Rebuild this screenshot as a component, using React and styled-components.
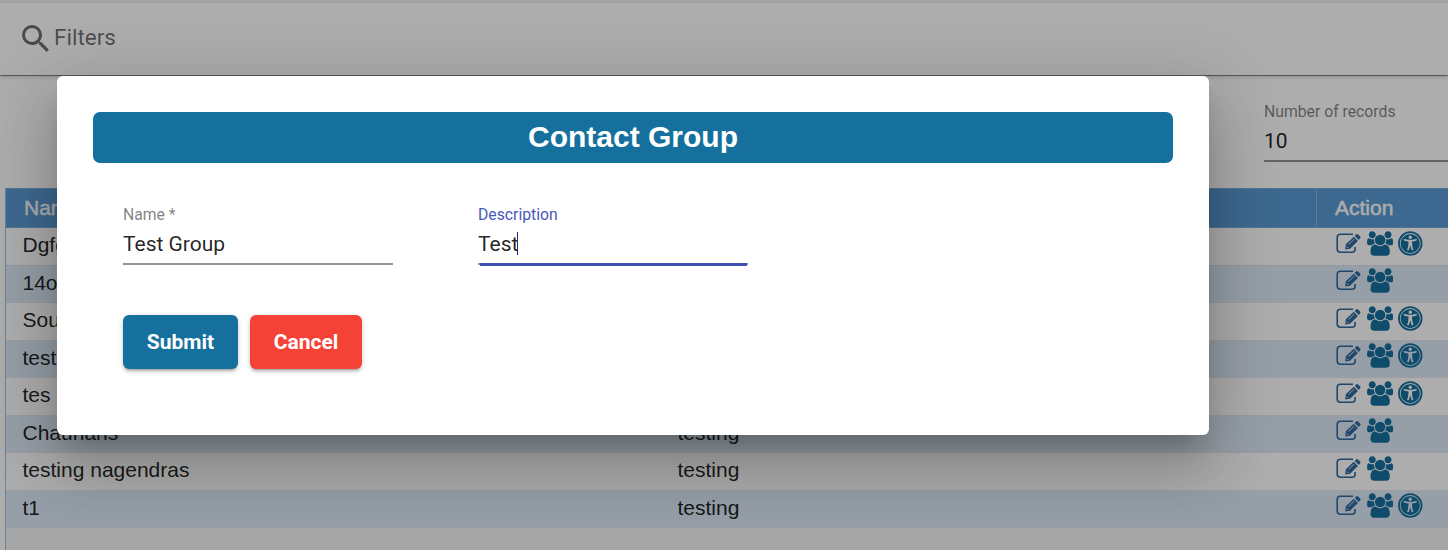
import React from "react";
import styled, { createGlobalStyle, css } from "styled-components";

const Global = createGlobalStyle`
  * { box-sizing: border-box; }
  html, body { margin: 0; height: 100%; overflow: hidden; }
  body { background: #fff; font-family: Roboto, "Liberation Sans", sans-serif; color: rgba(0,0,0,.87); }
`;

const Page = styled.div`
  position: relative;
  height: 550px;
  overflow: hidden;
  background: #fff;
`;

const TopStrip = styled.div`
  height: 3px;
  background: #f4f4f4;
`;

const FilterBar = styled.header`
  display: flex;
  align-items: center;
  gap: 5px;
  height: 72px;
  padding: 0 0 4px 22px;
  color: rgba(0, 0, 0, 0.56);
  font-size: 22.5px;
  background: #fff;
  box-shadow: 0 1px 0 rgba(0, 0, 0, 0.3), 0 2px 1px -1px rgba(0, 0, 0, 0.2), 0 2px 5px rgba(0, 0, 0, 0.15);
`;

const SearchIcon = styled.svg`
  width: 27px;
  height: 27px;
  margin-top: 2px;
  fill: #6e6e6e;
`;

const Toolbar = styled.section`
  display: flex;
  justify-content: flex-end;
  height: 113px;
  padding-top: 25px;
`;

const Field = styled.div`
  width: ${(p) => p.$width}px;
`;

const Label = styled.div`
  height: 21px;
  padding-top: 1px;
  line-height: 21px;
  font-size: 15.75px;
  color: ${(p) => (p.$focused ? "#4758bb" : "rgba(0,0,0,.5)")};
`;

const Value = styled.div`
  display: flex;
  align-items: center;
  height: 39px;
  font-size: 21px;
`;

const Caret = styled.span`
  width: 1px;
  height: 23px;
  margin-left: -1px;
  background: #222b70;
`;

const Underline = styled.div`
  height: 2px;
  background: #949494;
  ${(p) =>
    p.$focused &&
    css`
      padding: 0 1.5px;
      &::after {
        content: "";
        display: block;
        height: 3px;
        background: #3f51b5;
      }
    `}
`;

const Grid = styled.div`
  height: 380px;
  margin-left: 5px;
  border-left: 1px solid #9bc2e6;
  background: #f5f5f5;
  font-family: "Liberation Sans", Arial, sans-serif;
  font-size: 21px;
`;

const Row = styled.div`
  display: grid;
  grid-template-columns: 655px 656px 1fr;
  height: 37.5px;
  background: ${(p) => (p.$alt ? "#ddebf7" : "#fff")};
  border-bottom: 1px ${(p) => (p.$first ? "dotted #b9c8d8" : "solid #e3e8ed")};
`;

const HeadRow = styled(Row)`
  height: 40px;
  color: #fff;
  background: #5b9bd5;
  border-top: 1px solid #79addb;
  border-bottom: 1px solid #79addb;
  -webkit-text-stroke: 0.45px #fff;
`;

const Cell = styled.div`
  display: flex;
  align-items: center;
  padding: 0 0 2px 16.5px;
  white-space: nowrap;
`;

const HeadCell = styled(Cell)`
  padding: 0 0 0 18px;
  ${(p) => !p.$last && "border-right: 1px solid #8ab8e2;"}
`;

const Actions = styled(Cell)`
  align-items: flex-start;
  gap: 5.5px;
  padding: 2.6px 0 0 19px;
`;

const ActionIcon = styled.svg`
  flex: none;
  width: ${(p) => p.$w}px;
  height: 25px;
  color: #17709f;
`;

const Backdrop = styled.div`
  position: absolute;
  inset: 0;
  padding: 76px 0 0 57px;
  background: rgba(0, 0, 0, 0.32);
`;

const Dialog = styled.div`
  width: 1152px;
  height: 359px;
  padding: 36px;
  border-radius: 6px;
  background: #fff;
  box-shadow: 0 16px 22px -10px rgba(0, 0, 0, 0.2), 0 36px 57px 4px rgba(0, 0, 0, 0.14), 0 14px 69px 12px rgba(0, 0, 0, 0.12);
`;

const Title = styled.h1`
  height: 51px;
  margin: 0;
  border-radius: 7px;
  background: #16709e;
  color: #fff;
  font: bold 30px/50px "Liberation Sans", Arial, sans-serif;
  text-align: center;
`;

const Fields = styled.div`
  display: flex;
  gap: 85px;
  padding: 40px 30px 0;
`;

const Buttons = styled.div`
  display: flex;
  gap: 12px;
  padding: 50px 30px 0;
`;

const Button = styled.button`
  width: ${(p) => p.$width}px;
  height: 54px;
  padding: 0;
  border: 0;
  border-radius: 6px;
  background: ${(p) => p.$color};
  color: #fff;
  font: 700 21px Roboto, sans-serif;
  box-shadow: 0 4px 2px -3px rgba(0, 0, 0, 0.2), 0 3px 3px rgba(0, 0, 0, 0.14), 0 1px 6px rgba(0, 0, 0, 0.12);
`;

const EditIcon = () => (
  <ActionIcon $w={25} viewBox="0 0 25 25">
    <path d="M17 3.2H4.5Q1.2 3.2 1.2 6.4v11.6Q1.2 21.2 4.5 21.2H16Q19.1 21.2 19.1 18.2V16" fill="none" stroke="#326ba0" strokeWidth="1.6" />
    <path d="M9.2 18.5 9.8 13.2 17.8 5.8 21.9 9.9 14.1 17.7Z M18.7 4.9 20.3 3.3Q21.2 2.6 22.1 3.4L24.2 5.5Q24.9 6.3 24.2 7.2L22.7 8.9Z" fill="#326ba0" />
    <path d="M12.5 13.5 18.2 8.1M10.8 15.6 12.2 17" fill="none" stroke="#dce9f3" strokeWidth="0.9" />
  </ActionIcon>
);

const UsersIcon = () => (
  <ActionIcon $w={26.3} viewBox="0 0 1920 1792">
    <path
      fill="currentColor"
      d="M593 896q-162 5-265 128h-134q-82 0-138-40.5t-56-118.5q0-353 124-353 6 0 43.5 21t97.5 42.5 119 21.5q67 0 133-23-5 37-5 66 0 139 81 256zm1071 637q0 120-73 189.5t-194 69.5h-874q-121 0-194-69.5t-73-189.5q0-53 3.5-103.5t14-109 26.5-108.5 43-97.5 62-81 85.5-53.5 111.5-20q10 0 43 21.5t73 48 107 48 135 21.5 135-21.5 107-48 73-48 43-21.5q61 0 111.5 20t85.5 53.5 62 81 43 97.5 26.5 108.5 14 109 3.5 103.5zm-1024-1277q0 106-75 181t-181 75-181-75-75-181 75-181 181-75 181 75 75 181zm704 384q0 159-112.5 271.5t-271.5 112.5-271.5-112.5-112.5-271.5 112.5-271.5 271.5-112.5 271.5 112.5 112.5 271.5zm576 225q0 78-56 118.5t-138 40.5h-134q-103-123-265-128 81-117 81-256 0-29-5-66 66 23 133 23 59 0 119-21.5t97.5-42.5 43.5-21q124 0 124 353zm-128-609q0 106-75 181t-181 75-181-75-75-181 75-181 181-75 181 75 75 181z"
    />
  </ActionIcon>
);

const AccessIcon = () => (
  <ActionIcon $w={24.5} viewBox="0 0 1792 1792">
    <circle cx="896" cy="896" r="827" fill="none" stroke="currentColor" strokeWidth="132" />
    <path
      fill="currentColor"
      fillRule="evenodd"
      d="M1600 896a704 704 0 1 1-1408 0a704 704 0 1 1 1408 0zM1374 609q-6-26-28.5-39.5t-48.5-7.5q-261 62-401 62t-401-62q-26-6-48.5 7.5t-28.5 39.5 7.5 48.5 39.5 28.5q194 46 303 58-2 158-15.5 269t-26.5 155.5-41 115.5l-9 21q-10 25 1 49t36 34q9 4 23 4 44 0 60-41l8-20q54-139 71-259h42q17 120 71 259l8 20q16 41 60 41 14 0 23-4 25-10 36-34t1-49l-9-21q-28-71-41-115.5t-26.5-155.5-15.5-269q109-12 303-58 26-6 39.5-28.5t7.5-48.5zM1024 430a128 128 0 1 1-256 0a128 128 0 1 1 256 0z"
    />
  </ActionIcon>
);

const groups = [
  { name: "Dgfg", description: "", access: true },
  { name: "14oct", description: "", access: false },
  { name: "Sourav", description: "", access: true },
  { name: "test", description: "", access: true },
  { name: "tes", description: "", access: true },
  { name: "Chauhans", description: "testing", access: false },
  { name: "testing nagendras", description: "testing", access: false },
  { name: "t1", description: "testing", access: true },
];

export default function App() {
  return (
    <Page>
      <Global />
      <TopStrip />
      <FilterBar>
        <SearchIcon viewBox="3 3 17.5 17.5">
          <path d="M15.5 14h-.79l-.28-.27A6.471 6.471 0 0 0 16 9.5 6.5 6.5 0 1 0 9.5 16c1.61 0 3.09-.59 4.23-1.57l.27.28v.79l5 4.99L20.49 19l-4.99-5zm-6 0C7.01 14 5 11.99 5 9.5S7.01 5 9.5 5 14 7.01 14 9.5 11.99 14 9.5 14z" />
        </SearchIcon>
        Filters
      </FilterBar>
      <Toolbar>
        <Field $width={184}>
          <Label>Number of records</Label>
          <Value>10</Value>
          <Underline />
        </Field>
      </Toolbar>
      <Grid>
        <HeadRow>
          <HeadCell>Name</HeadCell>
          <HeadCell>Description</HeadCell>
          <HeadCell $last>Action</HeadCell>
        </HeadRow>
        {groups.map((g, i) => (
          <Row key={g.name} $alt={i % 2 === 1} $first={i === 0}>
            <Cell>{g.name}</Cell>
            <Cell>{g.description}</Cell>
            <Actions>
              <EditIcon />
              <UsersIcon />
              {g.access && <AccessIcon />}
            </Actions>
          </Row>
        ))}
      </Grid>
      <Backdrop>
        <Dialog>
          <Title>Contact Group</Title>
          <Fields>
            <Field $width={270}>
              <Label>Name *</Label>
              <Value>Test Group</Value>
              <Underline />
            </Field>
            <Field $width={270}>
              <Label $focused>Description</Label>
              <Value>
                Test
                <Caret />
              </Value>
              <Underline $focused />
            </Field>
          </Fields>
          <Buttons>
            <Button $width={115} $color="#16709e">Submit</Button>
            <Button $width={112} $color="#f44336">Cancel</Button>
          </Buttons>
        </Dialog>
      </Backdrop>
    </Page>
  );
}
